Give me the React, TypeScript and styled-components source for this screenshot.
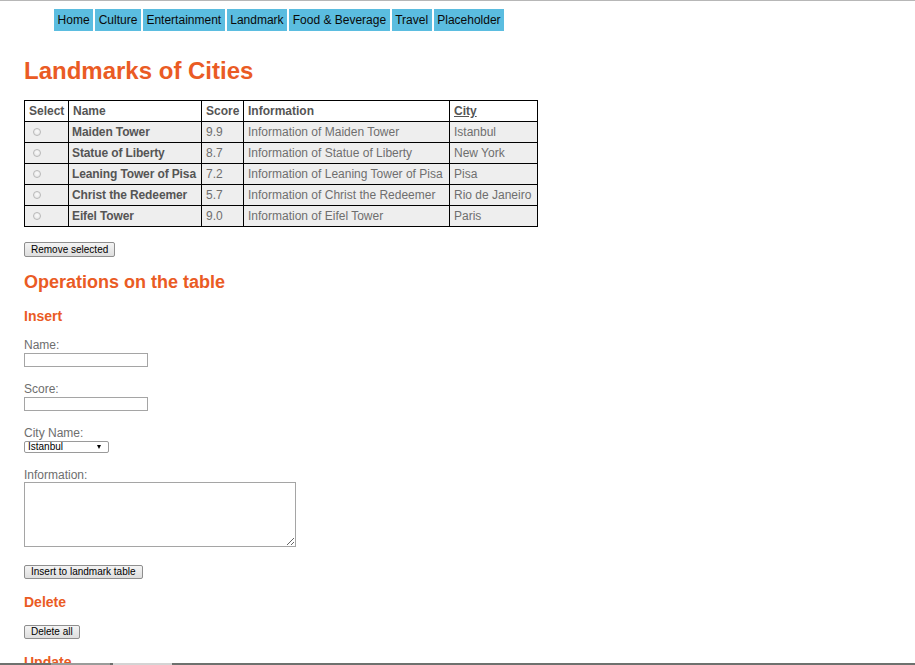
import React from 'react'
import styled, { createGlobalStyle } from 'styled-components'

const GlobalStyle = createGlobalStyle`
  html, body {
    margin: 0;
    padding: 0;
  }
  body {
    border-top: 1px solid #b7b7b7;
    font-family: "Liberation Sans", Arial, sans-serif;
    font-size: 12px;
    color: #666;
    background: #fff;
  }
`

const Page = styled.div`
  display: flex;
  flex-direction: column;
  align-items: flex-start;
  padding: 8px 24px 40px;
`

const Nav = styled.nav`
  display: flex;
  gap: 2px;
  margin-left: 30px;
`

const NavItem = styled.a`
  display: block;
  background: #5bbde0;
  color: #0a0a0a;
  padding: 0 3.55px;
  line-height: 22px;
  font-size: 12px;
  text-decoration: none;
`

const Title = styled.h1`
  margin: 26px 0 0;
  font-size: 24px;
  line-height: 28px;
  font-weight: bold;
  color: #ea5b24;
`

const SectionTitle = styled.h2`
  margin: 15px 0 0;
  font-size: 18px;
  line-height: 21px;
  font-weight: bold;
  color: #ea5b24;
`

const SubTitle = styled.h3<{ $top: number }>`
  margin: ${p => p.$top}px 0 0;
  font-size: 14px;
  line-height: 16px;
  font-weight: bold;
  color: #ea5b24;
`

const Table = styled.table`
  margin-top: 15px;
  border-collapse: collapse;
  table-layout: fixed;
  width: 513px;
`

const Col = styled.col<{ $w: number }>`
  width: ${p => p.$w}px;
`

const Th = styled.th`
  border: 1px solid #000;
  padding: 0 4px;
  height: 20px;
  line-height: 20px;
  text-align: left;
  font-weight: bold;
  color: #555;
  background: #fff;
  white-space: nowrap;
`

const SortLink = styled.a`
  color: #555;
  text-decoration: underline;
`

const Row = styled.tr`
  background: #eeeeee;
`

const Td = styled.td<{ $bold?: boolean }>`
  border: 1px solid #000;
  padding: 0 ${p => (p.$bold ? 3 : 4)}px;
  height: 20px;
  line-height: 20px;
  white-space: nowrap;
  overflow: hidden;
  font-weight: ${p => (p.$bold ? 'bold' : 'normal')};
  letter-spacing: ${p => (p.$bold ? '-0.12px' : 'normal')};
  color: ${p => (p.$bold ? '#555' : '#6e6e6e')};
`

const Radio = styled.input`
  appearance: none;
  display: block;
  width: 8px;
  height: 8px;
  margin: 0 0 0 4px;
  border: 1px solid #b9b9b9;
  border-radius: 50%;
  background: radial-gradient(circle at 50% 40%, #fafafa, #e2e2e2);
`

const Button = styled.button<{ $top: number; $h: number }>`
  margin-top: ${p => p.$top}px;
  height: ${p => p.$h}px;
  padding: 0 6px;
  font-family: "Liberation Sans", Arial, sans-serif;
  font-size: 10px;
  line-height: 1;
  color: #000;
  background: linear-gradient(#f4f4f4, #dedede);
  border: 1px solid #8e8e8e;
  border-radius: 2px;
`

const Field = styled.div<{ $top: number }>`
  display: flex;
  flex-direction: column;
  align-items: flex-start;
  margin-top: ${p => p.$top}px;
`

const Label = styled.label`
  font-size: 12px;
  line-height: 14px;
  color: #6e6e6e;
`

const TextInput = styled.input`
  box-sizing: border-box;
  width: 124px;
  height: 14px;
  margin-top: 1px;
  padding: 0 2px;
  border: 1px solid #a5a5a5;
  font-size: 10px;
`

const SelectWrap = styled.div`
  position: relative;
  margin-top: 1px;
  line-height: 0;
`

const Select = styled.select`
  appearance: none;
  display: block;
  box-sizing: border-box;
  width: 85px;
  height: 12px;
  margin: 0;
  padding: 0 0 0 3px;
  border: 1px solid #9a9a9a;
  border-radius: 2px;
  background: #fff;
  font-family: "Liberation Sans", Arial, sans-serif;
  font-size: 10px;
  line-height: 10px;
  color: #000;
`

const Arrow = styled.span`
  position: absolute;
  right: 8px;
  top: 4px;
  width: 0;
  height: 0;
  border-left: 2.5px solid transparent;
  border-right: 2.5px solid transparent;
  border-top: 4px solid #000;
  pointer-events: none;
`

const TextArea = styled.textarea`
  display: block;
  box-sizing: border-box;
  width: 272px;
  height: 65px;
  margin: 0;
  border: 1px solid #a5a5a5;
  font-size: 12px;
`

const Taskbar = styled.div`
  position: fixed;
  left: 0;
  right: 0;
  bottom: 0;
  height: 2px;
  display: flex;
  gap: 3px;
  padding-left: 51px;
  background: #6d716e;
`

const TaskTab = styled.span<{ $w: number; $light?: boolean }>`
  width: ${p => p.$w}px;
  background: ${p => (p.$light ? '#d4d4d4' : '#9a9c9a')};
`

const links = ['Home', 'Culture', 'Entertainment', 'Landmark', 'Food & Beverage', 'Travel', 'Placeholder']

const landmarks = [
  { name: 'Maiden Tower', score: '9.9', city: 'Istanbul' },
  { name: 'Statue of Liberty', score: '8.7', city: 'New York' },
  { name: 'Leaning Tower of Pisa', score: '7.2', city: 'Pisa' },
  { name: 'Christ the Redeemer', score: '5.7', city: 'Rio de Janeiro' },
  { name: 'Eifel Tower', score: '9.0', city: 'Paris' },
]

export default function App() {
  return (
    <>
      <GlobalStyle />
      <Page>
        <Nav>
          {links.map(l => (
            <NavItem key={l} href="#">{l}</NavItem>
          ))}
        </Nav>

        <Title>Landmarks of Cities</Title>

        <Table>
          <colgroup>
            <Col $w={44} />
            <Col $w={133} />
            <Col $w={42} />
            <Col $w={206} />
            <Col $w={88} />
          </colgroup>
          <thead>
            <tr>
              <Th>Select</Th>
              <Th>Name</Th>
              <Th>Score</Th>
              <Th>Information</Th>
              <Th><SortLink href="#">City</SortLink></Th>
            </tr>
          </thead>
          <tbody>
            {landmarks.map(l => (
              <Row key={l.name}>
                <Td><Radio type="radio" name="select" /></Td>
                <Td $bold>{l.name}</Td>
                <Td>{l.score}</Td>
                <Td>Information of {l.name}</Td>
                <Td>{l.city}</Td>
              </Row>
            ))}
          </tbody>
        </Table>

        <Button $top={15} $h={15}>Remove selected</Button>

        <SectionTitle>Operations on the table</SectionTitle>

        <SubTitle $top={15}>Insert</SubTitle>
        <Field $top={14}>
          <Label>Name:</Label>
          <TextInput type="text" />
        </Field>
        <Field $top={15}>
          <Label>Score:</Label>
          <TextInput type="text" />
        </Field>
        <Field $top={15}>
          <Label>City Name:</Label>
          <SelectWrap>
            <Select defaultValue="Istanbul">
              {landmarks.map(l => (
                <option key={l.city}>{l.city}</option>
              ))}
            </Select>
            <Arrow />
          </SelectWrap>
        </Field>
        <Field $top={15}>
          <Label>Information:</Label>
          <TextArea />
        </Field>
        <Button $top={18} $h={14}>Insert to landmark table</Button>

        <SubTitle $top={15}>Delete</SubTitle>
        <Button $top={15} $h={14}>Delete all</Button>

        <SubTitle $top={15}>Update</SubTitle>
        <Field $top={14}>
          <Label>Name:</Label>
          <TextInput type="text" />
        </Field>
        <Field $top={15}>
          <Label>Score:</Label>
          <TextInput type="text" />
        </Field>
      </Page>
      <Taskbar>
        <TaskTab $w={59} />
        <TaskTab $w={59} $light />
      </Taskbar>
    </>
  )
}
